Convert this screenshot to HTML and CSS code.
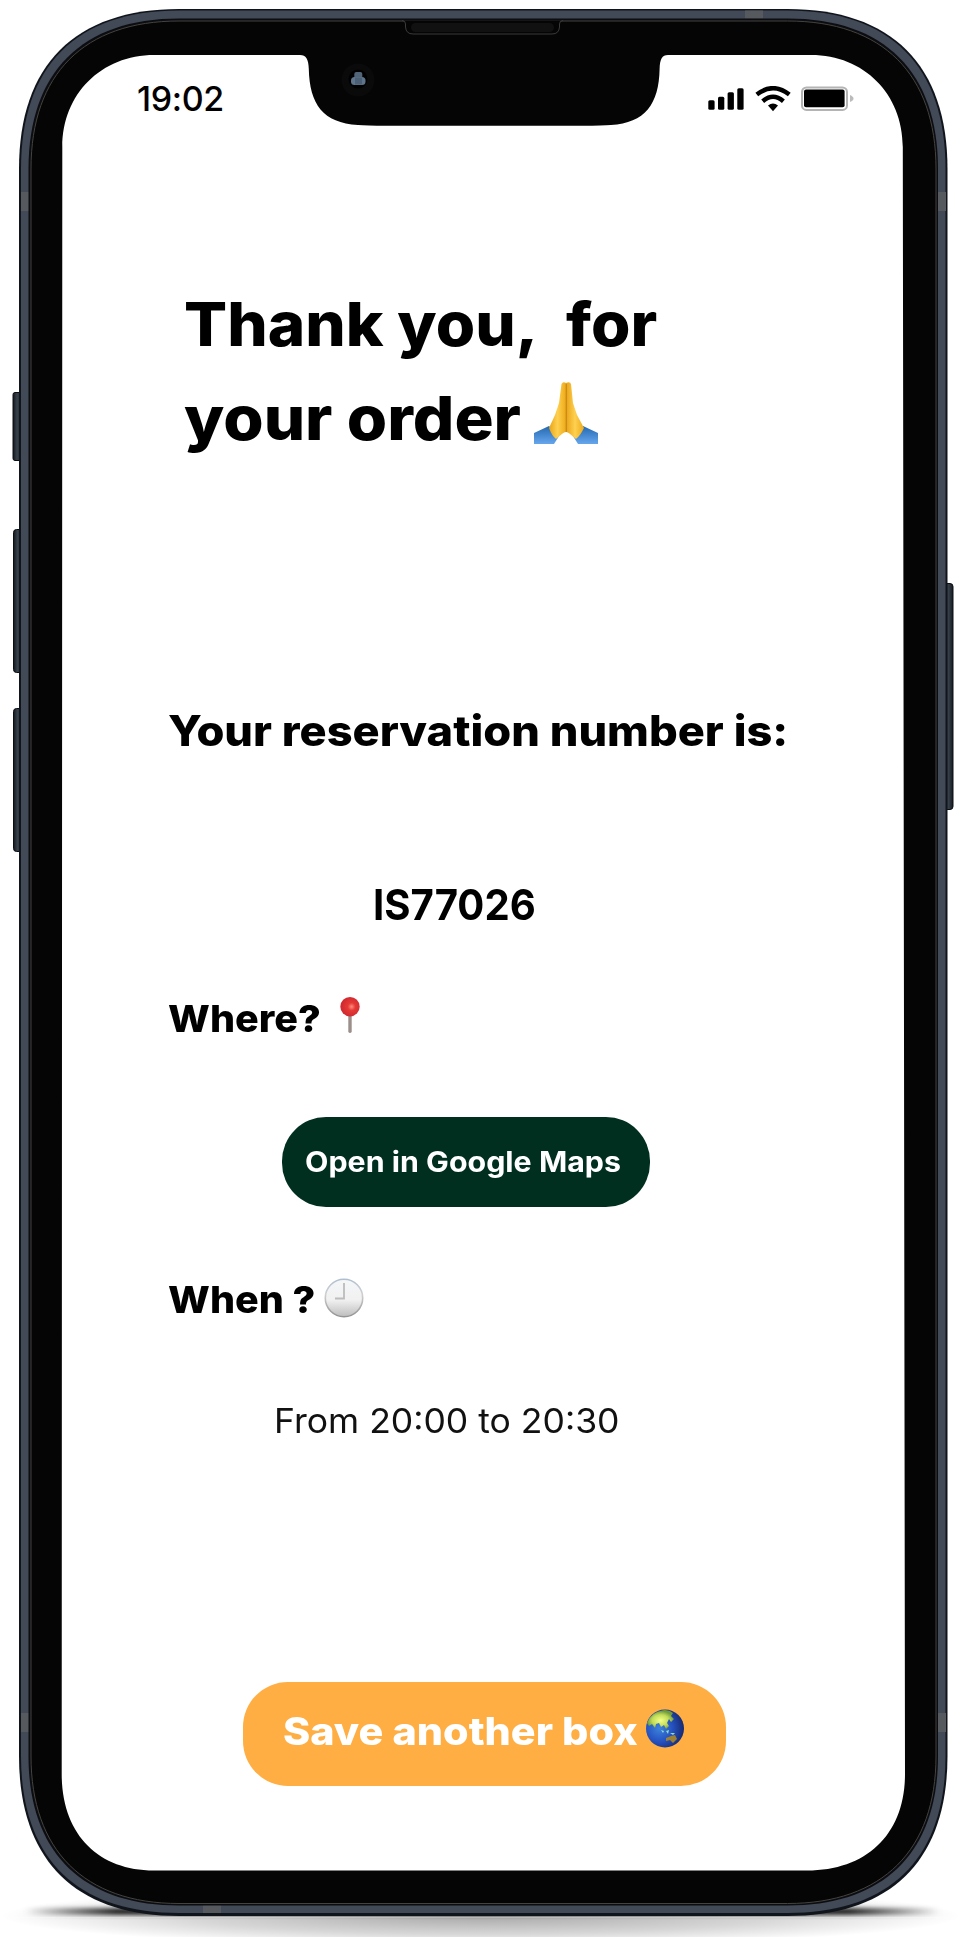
FILE: index.html
```
<!DOCTYPE html>
<html lang="en">
<head>
<meta charset="utf-8">
<title>Order confirmation</title>
<link rel="stylesheet" href="styles.css">
</head>
<body>
<main class="phone">
  <svg class="device" viewBox="0 0 961 1937" aria-hidden="true">
    <defs>
      <radialGradient id="floor"><stop offset="0" stop-color="#000" stop-opacity=".34"/><stop offset=".6" stop-color="#000" stop-opacity=".16"/><stop offset="1" stop-color="#000" stop-opacity="0"/></radialGradient>
      <linearGradient id="contact"><stop offset="0" stop-color="#000" stop-opacity="0"/><stop offset=".1" stop-color="#000" stop-opacity=".85"/><stop offset=".9" stop-color="#000" stop-opacity=".85"/><stop offset="1" stop-color="#000" stop-opacity="0"/></linearGradient>
      <linearGradient id="key"><stop offset="0" stop-color="#12171d"/><stop offset=".45" stop-color="#39424c"/><stop offset="1" stop-color="#161b22"/></linearGradient>
      <filter id="soft" x="-5%" y="-200%" width="110%" height="500%"><feGaussianBlur stdDeviation="3 2"/></filter>
    </defs>
    <ellipse cx="481" cy="1916" rx="480" ry="30" fill="url(#floor)"/>
    <rect x="25" y="1908" width="915" height="7" fill="url(#contact)" filter="url(#soft)"/>
    <rect x="0" y="1917" width="961" height="1" fill="#fff" opacity=".3"/>
    <g fill="url(#key)" stroke="#0b0f14">
      <rect x="13" y="392.500" width="9" height="68" rx="2"/>
      <rect x="13.500" y="529.500" width="9" height="143" rx="3"/>
      <rect x="13.500" y="708.500" width="9" height="143" rx="3"/>
      <rect x="944" y="583.500" width="9" height="226" rx="3"/>
    </g>
    <path fill="#10151c" d="M19 169C19 65 75 9 179 9H787.500C891.500 9 947.500 65 947.500 169V1756C947.500 1860 891.500 1916 787.500 1916H179C75 1916 19 1860 19 1756Z"/>
    <path fill="#424957" d="M21 169C21 66 76 10.500 179 10.500H787.500C890.500 10.500 945.500 66 945.500 169V1756C945.500 1858 890.500 1913 787.500 1913H179C76 1913 21 1858 21 1756Z"/>
    <g fill="#565a5e">
      <rect x="21" y="192" width="8" height="19"/><rect x="938" y="192" width="8" height="19"/>
      <rect x="21" y="1713" width="8" height="19"/><rect x="938" y="1713" width="8" height="19"/>
      <rect x="745" y="10.500" width="18" height="8"/><rect x="203" y="1905" width="18" height="8"/>
    </g>
    <path fill="#0b0d11" d="M28.500 169C28.500 72 82 18.500 179 18.500H787.500C884.500 18.500 938 72 938 169V1756C938 1852 884.500 1905.500 787.500 1905.500H179C82 1905.500 28.500 1852 28.500 1756Z"/>
    <path fill="#050505" stroke="#45433f" d="M31 169C31 74 84 21 179 21H787.500C882.500 21 936 74 936 169V1756C936 1850 882.500 1903.500 787.500 1903.500H179C84 1903.500 31 1850 31 1756Z"/>
    <path fill="#050505" stroke="#3b3b3b" d="M402 20.500Q405.500 20.500 405.500 24V27Q406 34 413 34H552Q559 34 559.500 27V24Q559.500 20.500 563 20.500"/>
    <rect x="411" y="23" width="143" height="9" rx="4.500" fill="#111"/>
    <path fill="#fff" d="M62.300 147C62.300 94 101.300 55 154.300 55H300C306 55 308.500 59 308.800 69C309.500 104 323 123 358 125Q366 125.700 386 125.700H583Q603 125.700 611 125C645 123 659 104 659.600 69C660 59 662 55 668 55H811C864 55 902.800 94 902.800 147L905 1774C905 1834 867 1870.500 807 1870.500H154C98 1870.500 61.700 1834 61.700 1774Z"/>
    <circle cx="358" cy="80" r="16.500" fill="#0a0a0a"/><circle cx="358" cy="79" r="9.500" fill="#000"/>
    <rect x="354.300" y="72" width="8" height="7" rx="2" fill="#526578"/><rect x="351" y="77" width="14.500" height="8" rx="3.500" fill="#5d748b"/><rect x="355" y="77.500" width="7" height="7" fill="#4c6075"/>
  </svg>

  <header class="status">
    <time class="clock">19:02</time>
    <svg class="status-icons" viewBox="0 0 146 26" aria-hidden="true">
      <rect x=".3" y="14.200" width="6.300" height="9.500" rx="1.500"/><rect x="10" y="10.700" width="6.300" height="13" rx="1.500"/><rect x="19.600" y="6.200" width="6.300" height="17.500" rx="1.500"/><rect x="29.300" y="2.300" width="6.300" height="21.400" rx="1.500"/>
      <g fill="none" stroke="#000" stroke-width="4.500"><path d="M48.800 8.600Q65 -4.200 81.300 8.600"/><path d="M54.700 15.200Q65 6.300 75.400 15.200"/></g>
      <path d="M60 19.400Q65 15.400 70 19.400L65 25.200Z"/>
      <rect x="94" y="1.500" width="45" height="22.400" rx="4.500" fill="none" stroke="#b4b4b4" stroke-width="2"/><rect x="96" y="3.600" width="40.600" height="17.600" rx="2"/><path d="M142 9Q145.500 10.500 145.500 12.500T142 16Z" fill="#bbb"/>
    </svg>
  </header>

  <h1 class="title"><span class="wide title-start">Thank you,&nbsp; for</span><br><span class="wide title-end">your order</span><svg class="hands" viewBox="0 0 64 62" role="img" aria-label="Folded hands">
    <defs><linearGradient id="skin"><stop offset="0" stop-color="#e8a316"/><stop offset=".5" stop-color="#ffd050"/><stop offset="1" stop-color="#edaa18"/></linearGradient><linearGradient id="cuff" x2="0" y2="1"><stop offset="0" stop-color="#2468b0"/><stop offset="1" stop-color="#66a6ed"/></linearGradient></defs>
    <path fill="url(#cuff)" d="M0 51L15 44L25 54L20 62H0ZM64 51L49 44L39 54L44 62H64Z"/>
    <path fill="url(#skin)" d="M32 1Q29 -1 27.500 2L25 21L21 33L15 46Q18 54 22 57C26 54 29 50 32 50Z"/>
    <path fill="url(#skin)" d="M32 1Q36 -1 37 2L39 21L43 33L50 46Q46 54 42 57C38 54 35 50 32 50Z"/>
    <path fill="none" stroke="#c98a18" stroke-width="1.300" d="M32.300 2V50"/>
  </svg></h1>

  <h2 class="label"><span class="wide">Your reservation number is:</span></h2>
  <p class="number"><span class="wide">IS77026</span></p>

  <h3 class="where"><span class="wide">Where?</span><svg class="pin" viewBox="0 0 20 36" role="img" aria-label="Pin">
    <defs><radialGradient id="bead" cx=".58" cy=".5"><stop offset="0" stop-color="#ff8d7c"/><stop offset=".4" stop-color="#e53935"/><stop offset="1" stop-color="#d22a30"/></radialGradient></defs>
    <path fill="#9b8f8a" d="M8.300 17H11.700V35Q10 37 8.300 35Z"/><circle cx="10" cy="9.700" r="9.700" fill="url(#bead)"/></svg></h3>
  <a class="maps"><span class="wide">Open in Google Maps</span></a>

  <h3 class="when"><span class="wide">When ?</span><svg class="dial" viewBox="0 0 40 40" role="img" aria-label="Nine o'clock">
    <defs><linearGradient id="face" x2="0" y2="1"><stop offset="0" stop-color="#f4f6f8"/><stop offset=".55" stop-color="#f1f1f1"/><stop offset="1" stop-color="#bdbdbd"/></linearGradient><linearGradient id="rim" x2="0" y2="1"><stop offset="0" stop-color="#b0bfd0"/><stop offset=".4" stop-color="#d0d0d0"/><stop offset="1" stop-color="#929292"/></linearGradient></defs>
    <circle cx="20" cy="20" r="18.700" fill="url(#face)" stroke="url(#rim)" stroke-width="1.600"/><path d="M20 5V20.500H11" fill="none" stroke="#bcbcbc" stroke-width="1.800"/></svg></h3>
  <p class="hours"><span class="wide">From 20:00 to 20:30</span></p>

  <a class="save"><span class="wide">Save another box</span><svg class="globe" viewBox="0 0 38 39" role="img" aria-label="Globe">
    <defs><radialGradient id="sea" cx=".35" cy=".5" r=".65"><stop offset="0" stop-color="#3c82dc"/><stop offset=".55" stop-color="#2450bf"/><stop offset="1" stop-color="#172a70"/></radialGradient><radialGradient id="land" cx=".5" cy=".55"><stop offset="0" stop-color="#f2ff87"/><stop offset=".6" stop-color="#c3dd58"/><stop offset="1" stop-color="#6f9b3c"/></radialGradient></defs>
    <circle cx="19" cy="19.500" r="19" fill="url(#sea)"/>
    <path fill="url(#land)" d="M1 14Q5 3 17 1.200Q23 .5 27 4L25 7L28 10L25 13L23 10L21 14L23 17L20 20L18 16L15 18L13 14L10 15L9 19L6 15L3 17Z"/>
    <path fill="#8dddc4" d="M15 21L18 22L17 24ZM20 22L23 21L22 25ZM24 24L29 24L27 26Z"/>
    <path fill="#9c8134" d="M20 29L25 27L29 26L31 30L27 34L24 31L20 32Z"/></svg></a>
</main>
</body>
</html>
```
FILE: styles.css
```
* { box-sizing: border-box; }
body { margin: 0; background: #fff; color: #000; font-family: Inter, "Liberation Sans", sans-serif; }
h1, h2, h3, p { margin: 0; font-weight: 800; white-space: nowrap; }
.phone { position: relative; display: flex; flex-direction: column; align-items: flex-start; width: 961px; height: 1937px; padding-top: 79px; overflow: hidden; }
.device { position: absolute; inset: 0; width: 961px; height: 1937px; z-index: -1; }

/* Horizontal stretch for the wide display lettering */
.wide { display: inline-block; transform: scaleX(var(--stretch)); transform-origin: left center; }

.status { display: flex; align-items: center; justify-content: space-between; width: 961px; height: 40px; padding: 0 107px 0 137px; }
.clock { font-size: 34px; font-weight: 550; line-height: 40px; letter-spacing: -.4px; }
.status-icons { width: 146px; height: 26px; }

.title { margin: 159.200px 0 0 183.500px; font-size: 61px; line-height: 93.500px; height: 187px; }
.title-start { --stretch: 1.045; }
.title-end { --stretch: 1.07; }
.hands { width: 64px; height: 62px; margin-left: 35.500px; vertical-align: -4px; }
.label { --stretch: 1.075; margin: 235.500px 0 0 168px; font-size: 42px; line-height: 60px; }
.number { --stretch: .933; margin: 113.700px 0 0 372.500px; font-size: 43px; font-weight: 750; line-height: 60px; }
.where, .when { --stretch: 1.055; display: flex; align-items: center; height: 50px; margin-left: 168px; font-size: 37.500px; line-height: 50px; }
.where { margin-top: 60px; }
.pin { width: 20px; height: 36px; margin: 0 0 8px 27.500px; }
.maps { --stretch: 1.085; display: flex; align-items: center; width: 368px; height: 90px; margin: 72.600px 0 0 282px; padding-left: 23px; border-radius: 44px; background: #002f20; color: #fff; font-size: 28px; font-weight: 750; white-space: nowrap; }
.when { margin-top: 68.400px; }
.dial { width: 40px; height: 40px; margin: 0 0 4px 16.500px; }
.hours { --stretch: 1.045; margin: 71px 0 0 273.500px; color: #111; font-size: 34px; font-weight: 420; line-height: 50px; }
.save { --stretch: 1.088; display: flex; align-items: center; width: 483px; height: 104px; margin: 235.700px 0 0 242.500px; padding: 0 0 6px 40.500px; border-radius: 45px; background: #ffae43; color: #fff; font-size: 38px; font-weight: 800; white-space: nowrap; }
.globe { width: 38px; height: 39px; margin: 0 0 5px 37px; }
```
